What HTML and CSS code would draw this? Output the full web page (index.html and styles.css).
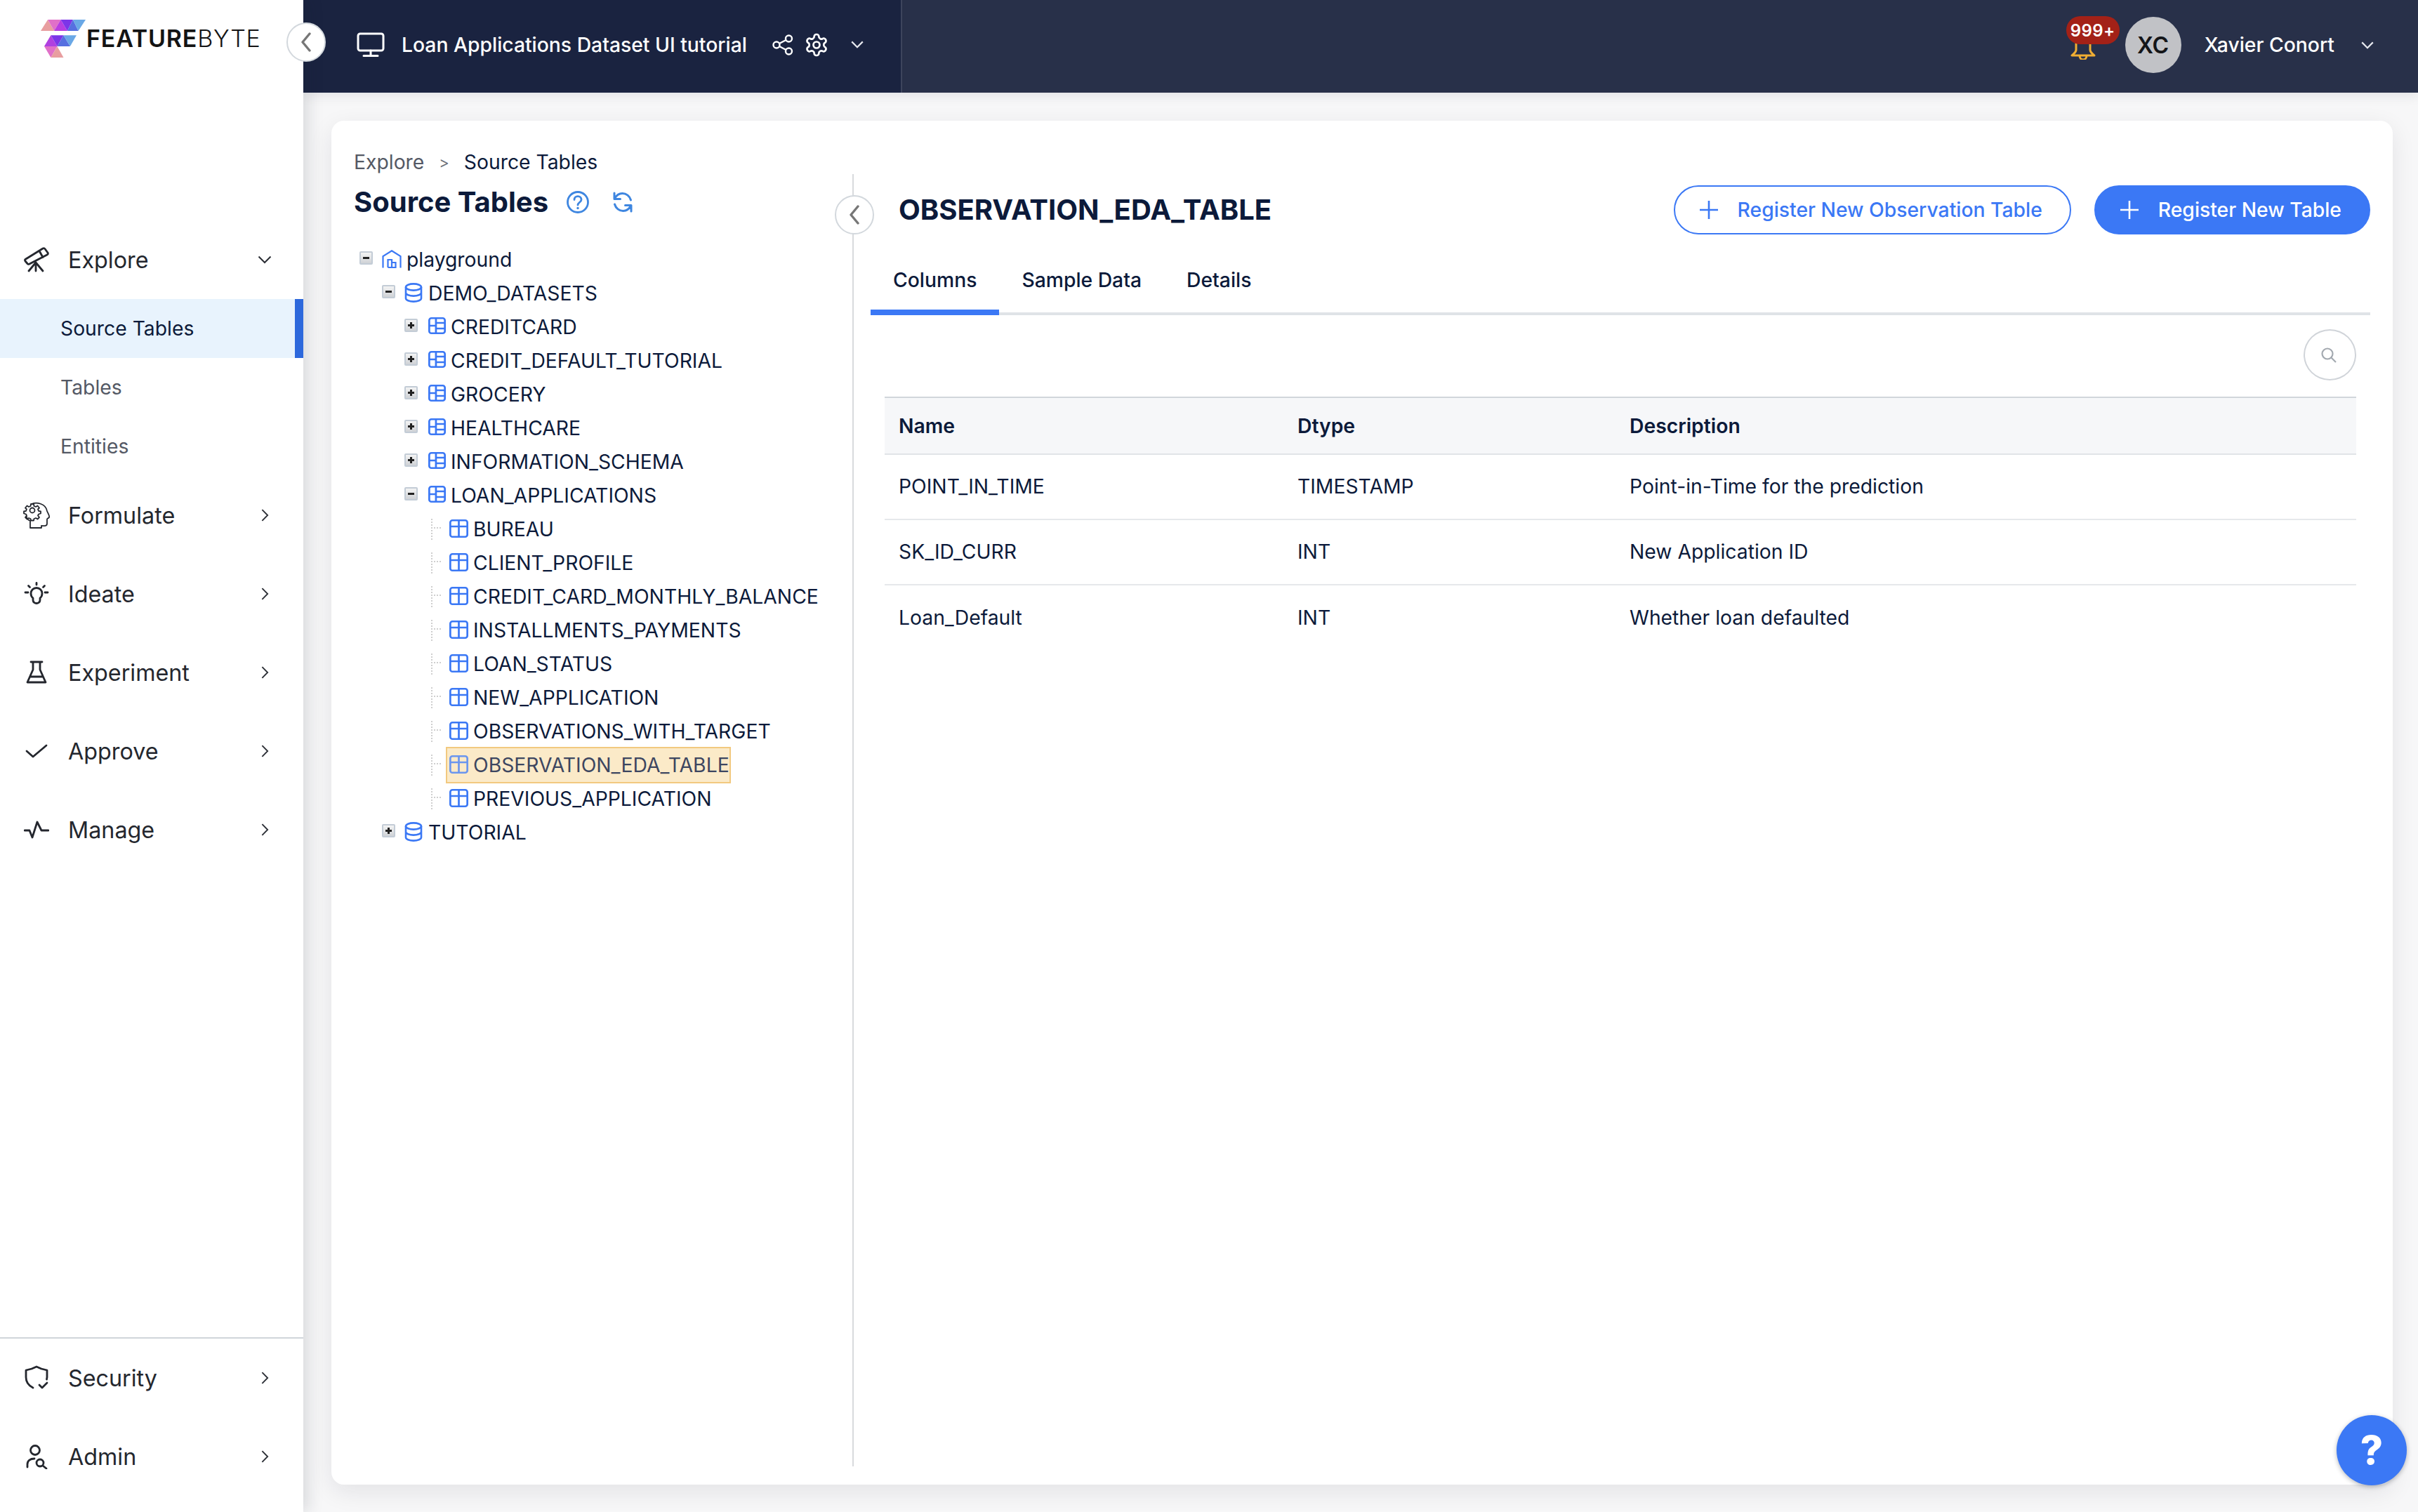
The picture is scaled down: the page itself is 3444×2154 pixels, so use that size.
FILE: index.html
```html
<!DOCTYPE html>
<html lang="en">
<head>
<meta charset="utf-8">
<title>Source Tables</title>
<link rel="stylesheet" href="styles.css">
</head>
<body>
<svg class="defs" aria-hidden="true">
  <symbol id="t-leaf" viewBox="0 0 26 26" preserveAspectRatio="none"><rect x="1.3" y="1.3" width="23.4" height="23.4" rx="3"/><path d="M13 1.3V24.7M1.3 10H24.7"/></symbol>
  <symbol id="t-node" viewBox="0 0 24 24" preserveAspectRatio="none"><rect x="1.3" y="1.3" width="21.4" height="21.4" rx="3"/><path d="M10.5 1.3V22.7M1.3 12H10.5M10.5 8H22.7M10.5 16H22.7"/></symbol>
  <symbol id="db" viewBox="0 0 26 28"><ellipse cx="13" cy="6" rx="11" ry="4.6"/><path d="M2 6V22C2 24.6 7 26.6 13 26.6S24 24.6 24 22V6M2 14C2 16.6 7 18.6 13 18.6S24 16.6 24 14"/></symbol>
  <symbol id="home" viewBox="0 0 28 26"><path d="M1.5 25.5V9L14 1.2 26.5 9V25.5M8.5 25V14H14V25M14 18H19.5V25H8.5"/></symbol>
  <symbol id="chev-r" viewBox="0 0 12 20"><path d="M1.5 1.5 10 10 1.5 18.5"/></symbol>
  <symbol id="chev-d" viewBox="0 0 20 12"><path d="M1.5 1.5 10 10 18.5 1.5"/></symbol>
  <symbol id="plus" viewBox="0 0 26 26"><path d="M13 0V26M0 13H26"/></symbol>
</svg>

<aside class="sidebar">
  <button class="round-btn side-toggle" type="button" aria-label="Collapse"><svg viewBox="0 0 16 28"><path d="M13 2 3 14 13 26"/></svg></button>
  <div class="logo">
    <svg class="logo-mark" viewBox="175 84 191 161">
      <path fill="#e89ea0" d="M175 132 205 84 232 132Z"/><path fill="#e070c8" d="M205 84 232 132 260 84Z"/><path fill="#b83ee0" d="M232 132 260 84 288 132Z"/><path fill="#7c35e8" d="M260 84 288 132 312 84Z"/><path fill="#5670e0" d="M288 132 312 84 335 132Z"/><path fill="#6aa8e6" d="M312 84 335 132 366 84Z"/>
      <path fill="#b040e0" d="M190 197 218 150 245 197Z"/><path fill="#7c35e8" d="M218 150 245 197 272 150Z"/><path fill="#5670e0" d="M245 197 272 150 300 197Z"/><path fill="#6aa8e6" d="M272 150 300 197 327 150Z"/>
      <path fill="#e070c8" d="M190 197 245 197 218 245Z"/><path fill="#e89ea0" d="M218 245 245 197 272 245Z"/>
    </svg>
    <span class="logo-text"><b>FEATURE</b>BYTE</span>
  </div>
  <nav class="nav">
    <a class="nav-item"><svg class="nav-ico" viewBox="0 0 36 36"><path d="M2 17.500 27 2Q29 1 30 2.500L34 8Q35 10 33 11L8 24Q6 25 5 23.500L2 20Q1 18.500 2 17.500ZM22 5.500 27 14.500M17 22 7 34M17 22 27 34M17 22V34"/></svg><span class="nav-label">Explore</span><svg class="chev-d"><use href="#chev-d"/></svg></a>
    <a class="sub-item active">Source Tables</a>
    <a class="sub-item">Tables</a>
    <a class="sub-item">Entities</a>
    <a class="nav-item"><svg class="nav-ico wide" viewBox="0 0 40 40"><path stroke-width="1.800" d="M11 33V28C6 26 6 24 6 22M13 4C20 1 33 3 35 14 36 17 39 21 38 23 37 25 35 24 35 26V32C35 36 30 35 27 35V38H11V33"/><circle stroke-width="1.800" cx="14" cy="13" r="3.500"/><path stroke-width="1.800" d="M12 4H16L16.500 7 19 8 21.500 6.500 24 9.500 22 11.500 23 14 26 14.500V17.500L23 18.500 22 20.500 24 23 21.500 25.500 19 24 16.500 25 16 27.500H12L11.500 25 9 24 6.500 25.500 4 23 6 20.500 5 18.500 2 17.500V14.500L5 14 6 11.500 4 9.500 6.500 6.500 9 8 11.500 7Z"/></svg><span class="nav-label">Formulate</span><svg class="chev-r"><use href="#chev-r"/></svg></a>
    <a class="nav-item"><svg class="nav-ico" viewBox="0 0 36 36"><path d="M18 2.500V5M2 16H6M30 16H34M6.500 6.500 8.500 8.500M29.500 6.500 27.500 8.500"/><path d="M13 24C10.500 22 10 19.500 10 17.500A8 8 0 0 1 26 17.500C26 19.500 25.500 22 23 24V27C23 30 20 31.500 18 31.500S13 30 13 27Z"/></svg><span class="nav-label">Ideate</span><svg class="chev-r"><use href="#chev-r"/></svg></a>
    <a class="nav-item"><svg class="nav-ico" viewBox="0 0 36 36"><path d="M10 3H26M13 3V14L5 32H31L23 14V3M9 24H27"/></svg><span class="nav-label">Experiment</span><svg class="chev-r"><use href="#chev-r"/></svg></a>
    <a class="nav-item"><svg class="nav-ico" viewBox="0 0 36 36"><path d="M4 18 13 26 32 10"/></svg><span class="nav-label">Approve</span><svg class="chev-r"><use href="#chev-r"/></svg></a>
    <a class="nav-item"><svg class="nav-ico" viewBox="0 0 36 36"><path d="M1 19H8L12 29 19 7 25 19H35"/></svg><span class="nav-label">Manage</span><svg class="chev-r"><use href="#chev-r"/></svg></a>
  </nav>
  <div class="nav-footer">
    <a class="nav-item"><svg class="nav-ico" viewBox="0 0 36 36"><path d="M13 32C7 29 3 24 3 17V7L11 5 18 2 25 5 33 7V17L32.500 20M22 28 26 32 33 25"/></svg><span class="nav-label">Security</span><svg class="chev-r"><use href="#chev-r"/></svg></a>
    <a class="nav-item"><svg class="nav-ico" viewBox="0 0 36 36"><circle cx="16" cy="9" r="6.500"/><path d="M5 33V29C5 24 9 21 15 21"/><circle cx="23" cy="27" r="5"/><path d="M27 31 32 35"/></svg><span class="nav-label">Admin</span><svg class="chev-r"><use href="#chev-r"/></svg></a>
  </div>
</aside>

<div class="main">
  <header class="topbar">
    <div class="project">
      <svg class="monitor" viewBox="0 0 40 36"><rect x="2" y="2" width="36" height="24" rx="3"/><path d="M20 26V33M10 33.500H30"/></svg>
      <span class="project-name">Loan Applications Dataset UI tutorial</span>
      <svg class="share" viewBox="0 0 30 30"><circle cx="6" cy="15" r="4.500"/><circle cx="23.500" cy="6" r="4.500"/><circle cx="23.500" cy="24" r="4.500"/><path d="M10 13 19.500 8M10 17 19.500 22"/></svg>
      <svg class="gear" viewBox="0 0 24 24"><path d="M12.220 2h-.44a2 2 0 0 0-2 2v.18a2 2 0 0 1-1 1.730l-.43.25a2 2 0 0 1-2 0l-.15-.08a2 2 0 0 0-2.730.73l-.22.38a2 2 0 0 0 .73 2.730l.15.1a2 2 0 0 1 1 1.720v.51a2 2 0 0 1-1 1.740l-.15.09a2 2 0 0 0-.73 2.730l.22.38a2 2 0 0 0 2.730.73l.15-.08a2 2 0 0 1 2 0l.43.25a2 2 0 0 1 1 1.730V20a2 2 0 0 0 2 2h.44a2 2 0 0 0 2-2v-.18a2 2 0 0 1 1-1.730l.43-.25a2 2 0 0 1 2 0l.15.08a2 2 0 0 0 2.730-.73l.22-.39a2 2 0 0 0-.73-2.730l-.15-.08a2 2 0 0 1-1-1.740v-.5a2 2 0 0 1 1-1.740l.15-.09a2 2 0 0 0 .73-2.730l-.22-.38a2 2 0 0 0-2.730-.73l-.15.08a2 2 0 0 1-2 0l-.43-.25a2 2 0 0 1-1-1.730V4a2 2 0 0 0-2-2z"/><circle cx="12" cy="12" r="3"/></svg>
      <svg class="chev-d light"><use href="#chev-d"/></svg>
    </div>
    <div class="account">
      <div class="bell">
        <svg class="bell-ico" viewBox="0 0 36 30"><path d="M8 2V16C8 20 5 21 2 24H34C31 21 28 20 28 16V2M13 24C13 32 23 32 23 24"/></svg>
        <span class="badge">999+</span>
      </div>
      <span class="avatar">XC</span>
      <span class="user-name">Xavier Conort</span>
      <svg class="chev-d light"><use href="#chev-d"/></svg>
    </div>
  </header>

  <main class="content">
    <section class="card">
      <div class="crumbs"><span class="crumb-muted">Explore</span><span class="crumb-sep">&gt;</span><span>Source Tables</span></div>
      <div class="split">
        <div class="tree-pane">
          <div class="pane-head">
            <h1 class="pane-title">Source Tables</h1>
            <svg class="help-ico" viewBox="0 0 32 32"><circle cx="16" cy="16" r="14.500"/><path d="M11 12.500C11 6 21 6 21 12.500 21 16 16 16.500 16 20"/><circle class="dot" cx="16" cy="24.500" r="1.700"/></svg>
            <svg class="refresh-ico" viewBox="0 0 32 30"><path d="M27.500 12C26 6.500 21 2.500 15.500 2.500 11 2.500 7 5 4.500 10M4.500 18C6 23.500 11 27.500 16.500 27.500 21 27.500 25 25 27.500 20M4 2V10.500H12.500M28 28V19.500H19.500"/></svg>
          </div>
          <ul class="tree">
            <li class="row l0"><span class="exp minus"></span><svg class="ico home"><use href="#home"/></svg><span>playground</span></li>
            <li class="row l1"><span class="exp minus"></span><svg class="ico db"><use href="#db"/></svg><span>DEMO_DATASETS</span></li>
            <li class="row l2"><span class="exp"></span><svg class="ico tn"><use href="#t-node"/></svg><span>CREDITCARD</span></li>
            <li class="row l2"><span class="exp"></span><svg class="ico tn"><use href="#t-node"/></svg><span>CREDIT_DEFAULT_TUTORIAL</span></li>
            <li class="row l2"><span class="exp"></span><svg class="ico tn"><use href="#t-node"/></svg><span>GROCERY</span></li>
            <li class="row l2"><span class="exp"></span><svg class="ico tn"><use href="#t-node"/></svg><span>HEALTHCARE</span></li>
            <li class="row l2"><span class="exp"></span><svg class="ico tn"><use href="#t-node"/></svg><span>INFORMATION_SCHEMA</span></li>
            <li class="row l2"><span class="exp minus"></span><svg class="ico tn"><use href="#t-node"/></svg><span>LOAN_APPLICATIONS</span></li>
            <li class="row l3"><span class="guide"></span><span class="node"><svg class="ico tl"><use href="#t-leaf"/></svg>BUREAU</span></li>
            <li class="row l3"><span class="guide"></span><span class="node"><svg class="ico tl"><use href="#t-leaf"/></svg>CLIENT_PROFILE</span></li>
            <li class="row l3"><span class="guide"></span><span class="node"><svg class="ico tl"><use href="#t-leaf"/></svg>CREDIT_CARD_MONTHLY_BALANCE</span></li>
            <li class="row l3"><span class="guide"></span><span class="node"><svg class="ico tl"><use href="#t-leaf"/></svg>INSTALLMENTS_PAYMENTS</span></li>
            <li class="row l3"><span class="guide"></span><span class="node"><svg class="ico tl"><use href="#t-leaf"/></svg>LOAN_STATUS</span></li>
            <li class="row l3"><span class="guide"></span><span class="node"><svg class="ico tl"><use href="#t-leaf"/></svg>NEW_APPLICATION</span></li>
            <li class="row l3"><span class="guide"></span><span class="node"><svg class="ico tl"><use href="#t-leaf"/></svg>OBSERVATIONS_WITH_TARGET</span></li>
            <li class="row l3"><span class="guide"></span><span class="node selected"><svg class="ico tl"><use href="#t-leaf"/></svg>OBSERVATION_EDA_TABLE</span></li>
            <li class="row l3"><span class="guide"></span><span class="node"><svg class="ico tl"><use href="#t-leaf"/></svg>PREVIOUS_APPLICATION</span></li>
            <li class="row l1"><span class="exp"></span><svg class="ico db"><use href="#db"/></svg><span>TUTORIAL</span></li>
          </ul>
          <button class="round-btn pane-toggle" type="button" aria-label="Collapse"><svg viewBox="0 0 16 28"><path d="M13 2 3 14 13 26"/></svg></button>
        </div>
        <div class="detail">
          <div class="detail-head">
            <h2 class="detail-title">OBSERVATION_EDA_TABLE</h2>
            <div class="actions">
              <button class="btn btn-outline" type="button"><svg class="plus"><use href="#plus"/></svg>Register New Observation Table</button>
              <button class="btn btn-solid" type="button"><svg class="plus"><use href="#plus"/></svg>Register New Table</button>
            </div>
          </div>
          <div class="tabs">
            <a class="tab active">Columns</a>
            <a class="tab">Sample Data</a>
            <a class="tab">Details</a>
          </div>
          <div class="table-wrap">
            <div class="search-row">
              <button class="search-btn" type="button" aria-label="Search"><svg viewBox="0 0 24 24"><circle cx="10" cy="10" r="7.500"/><path d="M15.500 15.500 22 22"/></svg></button>
            </div>
            <table class="grid">
              <colgroup><col class="c-name"><col class="c-type"><col></colgroup>
              <thead><tr><th>Name</th><th>Dtype</th><th>Description</th></tr></thead>
              <tbody>
                <tr><td>POINT_IN_TIME</td><td>TIMESTAMP</td><td>Point-in-Time for the prediction</td></tr>
                <tr><td>SK_ID_CURR</td><td>INT</td><td>New Application ID</td></tr>
                <tr><td>Loan_Default</td><td>INT</td><td>Whether loan defaulted</td></tr>
              </tbody>
            </table>
          </div>
        </div>
      </div>
    </section>
    <button class="fab" type="button" aria-label="Help">?</button>
  </main>
</div>
</body>
</html>
```

FILE: styles.css
```css
* { box-sizing: border-box; }
html, body { height: 100%; }
body {
  margin: 0;
  height: 2154px;
  display: flex;
  overflow: hidden;
  background: #f7f7f8;
  color: #0c1a3a;
  font-family: Inter, "Liberation Sans", sans-serif;
  font-size: 28.3px;
}
.defs { position: absolute; width: 0; height: 0; }
h1, h2 { margin: 0; }
ul { list-style: none; margin: 0; padding: 0; }
button { font-family: inherit; }

.sidebar {
  position: relative;
  z-index: 3;
  width: 432px;
  flex: none;
  display: flex;
  flex-direction: column;
  background: #fff;
  box-shadow: 6px 0 22px rgba(20, 25, 40, .14);
}
.logo {
  height: 314px;
  padding: 28px 0 0 58px;
  display: flex;
  align-items: flex-start;
  gap: 1px;
}
.logo-mark { width: 64px; height: 54px; flex: none; }
.logo-text {
  margin-top: 6px;
  font-size: 34px;
  line-height: 42px;
  font-weight: 300;
  color: #141414;
  letter-spacing: .8px;
  white-space: nowrap;
}
.logo-text b { font-weight: 600; }

.round-btn {
  position: absolute;
  width: 56px;
  height: 56px;
  padding: 0;
  display: flex;
  align-items: center;
  justify-content: center;
  background: #fff;
  border: 2.5px solid #d3d8dd;
  border-radius: 50%;
}
.round-btn svg { width: 16px; height: 28px; fill: none; stroke: #777; stroke-width: 3.4; stroke-linecap: round; stroke-linejoin: round; }
.side-toggle { left: 408px; top: 32px; z-index: 4; }

.nav-item {
  height: 112px;
  padding: 0 49px 0 34px;
  display: flex;
  align-items: center;
  color: #24272e;
  font-size: 32.3px;
}
.nav-ico {
  width: 36px;
  height: 36px;
  flex: none;
  fill: none;
  stroke: #24272e;
  stroke-width: 2.800;
  stroke-linecap: round;
  stroke-linejoin: round;
}
.nav-ico.wide { width: 40px; height: 40px; margin: 0 -2px; }
.nav-label { margin-left: 27px; flex: 1; }
.chev-r { width: 11px; height: 20px; fill: none; stroke: #2b2e35; stroke-width: 2; flex: none; }
.chev-d { width: 20px; height: 12px; fill: none; stroke: #2b2e35; stroke-width: 2; flex: none; margin-right: -4px; }
.chev-d.light { stroke: #e6e8ee; width: 20px; height: 11px; stroke-width: 2.400; margin-right: 0; }
.sub-item {
  height: 84px;
  padding-left: 86px;
  display: flex;
  align-items: center;
  color: #545965;
}
.sub-item.active {
  color: #0c1a3a;
  background: #e8f3fd;
  border-right: 12px solid #2d68dc;
}
.nav-footer {
  margin-top: auto;
  padding-bottom: 23px;
  border-top: 2px solid #d0d5da;
}

.main { flex: 1; min-width: 0; display: flex; flex-direction: column; }
.topbar {
  position: relative;
  z-index: 2;
  height: 132px;
  flex: none;
  display: flex;
  background: #283049;
  box-shadow: 0 4px 16px rgba(30, 35, 60, .1);
}
.project {
  width: 853px;
  padding: 0 0 5px 76px;
  display: flex;
  align-items: center;
  background: #1a2340;
  border-right: 2px solid #3d445c;
  color: #fff;
  font-weight: 500;
}
.monitor { width: 40px; height: 36px; fill: none; stroke: #fff; stroke-width: 3; stroke-linecap: round; flex: none; }
.project-name { margin-left: 24px; white-space: nowrap; }
.share { width: 30px; height: 30px; margin-left: 36px; fill: none; stroke: #fff; stroke-width: 2.400; flex: none; }
.gear { width: 36px; height: 36px; margin-left: 15px; fill: none; stroke: #fff; stroke-width: 1.800; flex: none; }
.project .chev-d { margin-left: 30px; }
.account {
  margin-left: auto;
  padding: 0 62px 4px 0;
  display: flex;
  align-items: center;
  color: #fff;
  font-weight: 500;
}
.bell { position: relative; width: 76px; height: 62px; margin-top: -20px; }
.bell-ico { position: absolute; left: 6px; top: 32px; width: 36px; height: 30px; fill: none; stroke: #f0ad33; stroke-width: 3; stroke-linecap: round; stroke-linejoin: round; }
.badge {
  position: absolute;
  inset: 0 0 auto 0;
  height: 40px;
  display: flex;
  align-items: center;
  justify-content: center;
  background: #a32117;
  border-radius: 20px;
  color: #fff;
  font-size: 24px;
  font-weight: 600;
  letter-spacing: .4px;
}
.avatar {
  width: 80px;
  height: 80px;
  margin-left: 8px;
  display: flex;
  align-items: center;
  justify-content: center;
  background: #c1c2c6;
  border-radius: 50%;
  color: #141518;
  font-size: 32px;
  font-weight: 600;
}
.user-name { margin-left: 33px; white-space: nowrap; }
.account .chev-d { margin-left: 37px; }

.content {
  position: relative;
  flex: 1;
  min-height: 0;
  padding: 40px 36px 39px 40px;
  display: flex;
}
.card {
  flex: 1;
  min-width: 0;
  padding: 42px 0 26px;
  display: flex;
  flex-direction: column;
  background: #fff;
  border-radius: 18px;
  box-shadow: 0 10px 34px rgba(20, 25, 40, .09);
}
.crumbs {
  height: 34px;
  padding-left: 32px;
  display: flex;
  align-items: center;
  line-height: 34px;
}
.crumb-muted { color: #545965; }
.crumb-sep { margin: 0 21px; color: #6b7078; font-size: 22px; }
.split { flex: 1; min-height: 0; display: flex; }
.tree-pane {
  position: relative;
  width: 744px;
  flex: none;
  padding: 16px 0 0 32px;
  border-right: 2px solid #d8dadd;
}
.pane-head { height: 48px; display: flex; align-items: center; }
.pane-title { font-size: 40px; line-height: 48px; font-weight: 700; white-space: nowrap; }
.help-ico { width: 32px; height: 32px; margin-left: 26px; fill: none; stroke: #3e86e0; stroke-width: 2.800; stroke-linecap: round; flex: none; }
.help-ico .dot { fill: #3e86e0; stroke: none; }
.refresh-ico { width: 32px; height: 30px; margin-left: 32px; fill: none; stroke: #3e86e0; stroke-width: 3; stroke-linecap: round; stroke-linejoin: round; flex: none; }
.pane-toggle { right: -31px; top: 30px; z-index: 1; }

.tree { margin-top: 34px; }
.row {
  height: 48px;
  display: flex;
  align-items: center;
  white-space: nowrap;
}
.l0 { padding-left: 8px; }
.l1 { padding-left: 40px; }
.l2 { padding-left: 72px; }
.l3 { padding-left: 104px; }
.exp {
  position: relative;
  width: 19px;
  height: 19px;
  margin: 0 13px 5px 0;
  flex: none;
  background: linear-gradient(#f4f4f4, #cfd2d6);
  border: 2px solid #c3ccd6;
  border-radius: 2px;
}
.l2 .exp { margin-right: 15px; }
.exp::before, .exp:not(.minus)::after {
  content: "";
  position: absolute;
  left: 3px;
  top: 6px;
  width: 9px;
  height: 3px;
  background: #222;
}
.exp:not(.minus)::after { left: 6px; top: 3px; width: 3px; height: 9px; }
.ico { fill: none; stroke: #3b78f5; stroke-width: 2.600; flex: none; }
.ico.home { width: 28px; height: 26px; margin: 0 7px 3px 0; stroke-width: 2.200; }
.ico.db { width: 26px; height: 28px; margin: 0 8px 3px 0; }
.ico.tn { width: 25px; height: 24px; margin: 0 7px 5px 0; }
.ico.tl { width: 27px; height: 26px; margin: 0 7px 3px 0; }
.guide {
  position: relative;
  width: 28px;
  height: 30px;
  flex: none;
  margin-left: 6px;
  border-left: 2px dotted #cfcfcf;
  margin-right: -7px;
}
.guide::after {
  content: "";
  position: absolute;
  left: 2px;
  top: 12px;
  width: 10px;
  border-top: 2px dotted #cfcfcf;
}
.node {
  height: 52px;
  padding: 0 0 0 3px;
  display: flex;
  align-items: center;
  border: 2px solid transparent;
  white-space: nowrap;
}
.node.selected { background: #fbeac8; border-color: #f2c97f; color: #3d4660; }
.node.selected .ico { stroke: #6b96ee; }

.detail {
  flex: 1;
  min-width: 0;
  padding: 16px 32px 0 24px;
  display: flex;
  flex-direction: column;
}
.detail-head {
  height: 70px;
  padding-left: 40px;
  display: flex;
  align-items: center;
  justify-content: space-between;
}
.detail-title { font-size: 40px; line-height: 48px; font-weight: 700; white-space: nowrap; }
.actions { display: flex; gap: 33px; }
.btn {
  height: 70px;
  display: flex;
  align-items: center;
  gap: 28px;
  padding: 0 39px 0 35px;
  border: 2px solid #3b78f5;
  border-radius: 35px;
  font-size: 28.3px;
  font-weight: 500;
  white-space: nowrap;
}
.btn-outline { background: #fff; color: #3b78f5; }
.btn-solid { background: #3b78f5; color: #fff; }
.plus { width: 26px; height: 26px; fill: none; stroke: currentColor; stroke-width: 2.600; flex: none; }
.tabs {
  margin-top: 34px;
  display: flex;
  border-bottom: 4px solid #dfe3e7;
}
.tab {
  height: 81px;
  margin-bottom: -4px;
  padding: 14px 32px 0 32px;
  line-height: 34px;
  font-weight: 500;
  border-bottom: 8px solid transparent;
}
.tab.active { border-bottom-color: #3b78f5; }
.table-wrap { padding: 20px 20px 0; }
.search-row { display: flex; justify-content: flex-end; margin-bottom: 23px; }
.search-btn {
  width: 75px;
  height: 73px;
  padding: 0 4px 0 0;
  display: flex;
  align-items: center;
  justify-content: center;
  background: #fff;
  border: 2px solid #d0d4d9;
  border-radius: 50%;
}
.search-btn svg { width: 24px; height: 24px; fill: none; stroke: #a3a9b0; stroke-width: 2.200; }
.grid { width: 100%; table-layout: fixed; border-collapse: separate; border-spacing: 0; }
.c-name { width: 568px; }
.c-type { width: 473px; }
.grid th, .grid td { padding: 0 0 0 20px; text-align: left; }
.grid th {
  height: 83px;
  font-weight: 600;
  background: #f6f7f9;
  border-top: 2px solid #d1d6db;
  border-bottom: 2px solid #e1e4e8;
}
.grid td { height: 93px; padding-bottom: 2px; border-bottom: 2px solid #e6e8eb; }
.grid tr:last-child td { border-bottom: 0; }

.fab {
  position: absolute;
  right: 16px;
  bottom: 38px;
  width: 100px;
  height: 100px;
  padding: 0;
  background: #3b78f5;
  border: 0;
  border-radius: 50%;
  box-shadow: 0 2px 6px rgba(20, 25, 40, .3);
  color: #fff;
  font-size: 56px;
  font-weight: 800;
  line-height: 100px;
}
```
